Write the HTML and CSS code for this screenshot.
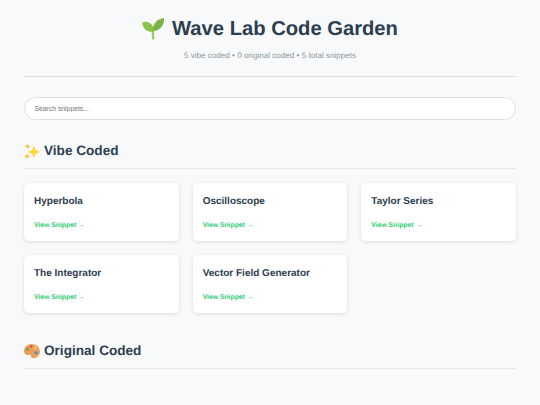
FILE: index.html
```html
<!DOCTYPE html>
<html lang="en">
<head>
<meta charset="utf-8">
<title>Wave Lab Code Garden</title>
<link rel="stylesheet" href="styles.css">
</head>
<body>
<div class="container">
  <header class="header">
    <h1 class="title">
      <svg class="emoji emoji-lg" viewBox="0 0 36 36" aria-hidden="true">
        <path fill="#9ccc65" d="M16.500 19h3.500c-.5 5-.3 10 .5 16h-4c-.8-6-.8-11 0-16z"/>
        <path fill="#8bc34a" d="M0 8C9 3 19 9 20 22 9 24 2 18 0 8z"/>
        <path fill="#7cb342" d="M18 21C17 10 25 1 36 0c1 12-7 21-18 21z"/>
      </svg>
      <span>Wave Lab Code Garden</span>
    </h1>
    <p class="stats">5 vibe coded • 0 original coded • 5 total snippets</p>
  </header>
  <input class="search" type="text" placeholder="Search snippets...">
  <section class="section">
    <h2 class="section-title">
      <svg class="emoji" viewBox="0 0 36 36" aria-hidden="true">
        <path fill="#fdd835" d="M22 5l3.500 11L36 20l-10.500 4L22 35l-3.500-11L8 20l10.500-4z"/>
        <path fill="#fbc02d" d="M8 1l1.800 5.200L15 8l-5.200 1.800L8 15l-1.800-5.200L1 8l5.200-1.800zM7 23l1.800 5.200L14 30l-5.200 1.800L7 37l-1.800-5.200L0 30l5.200-1.800z"/>
      </svg>
      <span>Vibe Coded</span>
    </h2>
    <div class="grid">
      <a class="card"><h3 class="card-title">Hyperbola</h3><span class="card-link">View Snippet →</span></a>
      <a class="card"><h3 class="card-title">Oscilloscope</h3><span class="card-link">View Snippet →</span></a>
      <a class="card"><h3 class="card-title">Taylor Series</h3><span class="card-link">View Snippet →</span></a>
      <a class="card"><h3 class="card-title">The Integrator</h3><span class="card-link">View Snippet →</span></a>
      <a class="card"><h3 class="card-title">Vector Field Generator</h3><span class="card-link">View Snippet →</span></a>
    </div>
  </section>
  <section class="section section-original">
    <h2 class="section-title">
      <svg class="emoji" viewBox="0 0 36 36" aria-hidden="true">
        <path fill="#e8a15c" d="M17 2C8 2 0 9 0 18c0 7 5 10 10 9 4-1 6 0 6 3 0 4 3 5 7 4 7-1 13-7 13-15C36 9 27 2 17 2z"/>
        <circle fill="#66a043" cx="8" cy="14" r="3.200"/>
        <circle fill="#e0503c" cx="16" cy="8" r="3.200"/>
        <circle fill="#f4cf4b" cx="26" cy="11" r="3"/>
        <circle fill="#4f8fc0" cx="27" cy="22" r="3.400"/>
      </svg>
      <span>Original Coded</span>
    </h2>
  </section>
</div>
</body>
</html>
```
FILE: styles.css
```css
* { box-sizing: border-box; }
html, body { margin: 0; }
body {
  background: #f8f9fa;
  color: #2c3e50;
  font-family: "Liberation Sans", Arial, sans-serif;
  text-rendering: geometricPrecision;
  overflow: hidden;
  height: 405px;
}
.container { padding: 0 24px; }
.header {
  text-align: center;
  padding-top: 16px;
  height: 77px;
  border-bottom: 1px solid #e0e0e0;
}
.title {
  margin: 0;
  font-size: 20.200px;
  line-height: 26px;
  font-weight: 700;
  display: flex;
  justify-content: center;
  align-items: center;
  gap: 8px;
}
.emoji { width: 16px; height: 16px; flex: none; }
.emoji-lg { width: 22px; height: 22px; }
.stats {
  margin: 8px 0 0;
  font-size: 8.100px;
  line-height: 11px;
  color: #8a9699;
}
.search {
  display: block;
  width: 100%;
  height: 23px;
  margin-top: 20px;
  padding: 0 9.500px;
  border: 1px solid #e0e0e0;
  border-radius: 12px;
  background: #fff;
  font-family: inherit;
  font-size: 6.800px;
  outline: none;
}
.search::placeholder { color: #757575; }
.section { margin-top: 21px; }
.section-original { margin-top: 28px; }
.section-title {
  margin: 0 0 14px;
  padding-bottom: 7px;
  height: 28px;
  border-bottom: 1px solid #e6e8ea;
  display: flex;
  align-items: center;
  gap: 4px;
  font-size: 13.600px;
  line-height: 20px;
  font-weight: 700;
}
.grid {
  display: grid;
  grid-template-columns: repeat(3, 1fr);
  gap: 14px;
}
.card {
  display: flex;
  flex-direction: column;
  height: 58px;
  padding: 12px 10px 11px;
  background: #fff;
  border-radius: 5px;
  box-shadow: 0 1px 4px rgba(0, 0, 0, .12);
}
.card-title {
  margin: 0;
  font-size: 10px;
  line-height: 13px;
  font-weight: 700;
}
.card-link {
  margin-top: auto;
  font-size: 6.800px;
  line-height: 9px;
  font-weight: 700;
  color: #2ecc71;
}
```
